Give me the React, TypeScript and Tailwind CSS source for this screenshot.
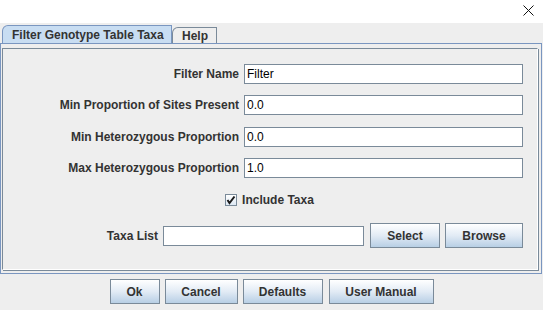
import React from 'react';

const label = 'font-bold text-[#333333] whitespace-nowrap';
const field =
  'h-[20px] bg-white border border-[#7a8a99] px-[2px] flex items-center text-black';
const button =
  'h-[25px] border border-[#7a8a99] bg-gradient-to-b from-white via-[#e2ebf5] to-[#b8cfe5] font-bold text-[#333333] flex items-center justify-center';

function FieldRow({name, value, mt}: {name: string; value: string; mt: string}) {
  return (
    <div className={`flex items-center justify-end gap-[5px] pr-[14px] ${mt}`}>
      <span className={label}>{name}</span>
      <div className={`${field} w-[279px]`}>{value}</div>
    </div>
  );
}

export default function App() {
  return (
    <div className="w-[543px] h-[310px] bg-[#eeeeee] font-['Liberation_Sans',Arial,sans-serif] text-[12px] leading-none overflow-hidden">
      <div className="h-[23px] bg-white flex items-start justify-end pr-[9px] pt-[5px]">
        <svg width="11" height="11" viewBox="0 0 11 11">
          <path d="M0.5 0.5 L10.5 10.5 M10.5 0.5 L0.5 10.5" stroke="#111" strokeWidth="1" />
        </svg>
      </div>

      <div className="h-[20px] flex items-end pl-[2px]">
        <div className="h-[18px] w-[170px] bg-[#c8ddf2] border border-b-0 border-[#7a96c0] rounded-tl-[6px] pl-[9px] flex items-center font-bold text-[#333333]">
          Filter Genotype Table Taxa
        </div>
        <div className="h-[16px] w-[45px] border-t border-r border-l border-[#7a8a99] rounded-tl-[6px] pl-[9px] flex items-center font-bold text-[#333333]">
          Help
        </div>
      </div>

      <div className="w-[542px] h-[231px] border border-[#7a96c0] pl-[1px] pt-[4px] pr-[3px] pb-[3px]">
        <div className="h-full border border-[#7a8a99] border-r-white border-b-white shadow-[1px_1px_0_#7a8a99] pt-[15px]">
          <FieldRow name="Filter Name" value="Filter" mt="" />
          <FieldRow name="Min Proportion of Sites Present" value="0.0" mt="mt-[11px]" />
          <FieldRow name="Min Heterozygous Proportion" value="0.0" mt="mt-[12px]" />
          <FieldRow name="Max Heterozygous Proportion" value="1.0" mt="mt-[11px]" />

          <div className="mt-[12px] h-[20px] flex items-center justify-center gap-[5px] pr-[1px]">
            <div className="w-[12px] h-[12px] border border-[#7a8a99] bg-gradient-to-b from-white to-[#dde8f3] flex items-center justify-center">
              <svg width="10" height="10" viewBox="0 0 10 10">
                <path d="M1.5 5 L3.5 8 L8.5 1.5" stroke="#1a1a1a" strokeWidth="2" fill="none" />
              </svg>
            </div>
            <span className={label}>Include Taxa</span>
          </div>

          <div className="mt-[13px] flex items-center justify-end pr-[14px]">
            <span className={`${label} mr-[5px]`}>Taxa List</span>
            <div className={`${field} w-[201px] mr-[6px]`}></div>
            <div className={`${button} w-[70px] mr-[5px]`}>Select</div>
            <div className={`${button} w-[78px]`}>Browse</div>
          </div>
        </div>
      </div>

      <div className="mt-[5px] flex justify-center gap-[5px]">
        <div className={`${button} w-[50px]`}>Ok</div>
        <div className={`${button} w-[73px]`}>Cancel</div>
        <div className={`${button} w-[80px]`}>Defaults</div>
        <div className={`${button} w-[105px] ml-[1px]`}>User Manual</div>
      </div>
    </div>
  );
}
